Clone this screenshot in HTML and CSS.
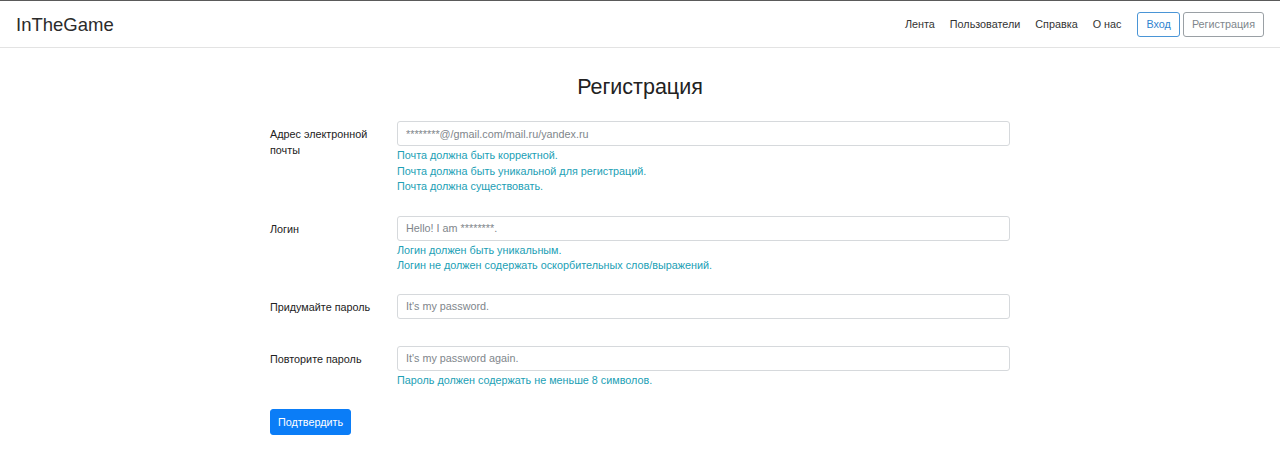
FILE: index.html
```html
<!DOCTYPE html>
<html lang="ru">
<head>
<meta charset="utf-8">
<title>InTheGame — Регистрация</title>
<link rel="stylesheet" href="styles.css">
</head>
<body>
<header class="navbar">
  <a class="brand" href="#">InTheGame</a>
  <nav class="nav">
    <a class="nav-link" href="#">Лента</a>
    <a class="nav-link" href="#">Пользователи</a>
    <a class="nav-link" href="#">Справка</a>
    <a class="nav-link" href="#">О нас</a>
    <div class="nav-buttons">
      <a class="btn btn-outline-primary" href="#">Вход</a>
      <a class="btn btn-outline-secondary" href="#">Регистрация</a>
    </div>
  </nav>
</header>
<main class="container">
  <h1 class="title">Регистрация</h1>
  <form class="form">
    <div class="form-group group-email">
      <label class="form-label" for="email">Адрес электронной почты</label>
      <div class="form-field">
        <input class="form-control" id="email" type="email" placeholder="********@/gmail.com/mail.ru/yandex.ru">
        <div class="help">
          <div>Почта должна быть корректной.</div>
          <div>Почта должна быть уникальной для регистраций.</div>
          <div>Почта должна существовать.</div>
        </div>
      </div>
    </div>
    <div class="form-group group-login">
      <label class="form-label" for="login">Логин</label>
      <div class="form-field">
        <input class="form-control" id="login" type="text" placeholder="Hello! I am ********.">
        <div class="help">
          <div>Логин должен быть уникальным.</div>
          <div>Логин не должен содержать оскорбительных слов/выражений.</div>
        </div>
      </div>
    </div>
    <div class="form-group group-pass">
      <label class="form-label" for="pass">Придумайте пароль</label>
      <div class="form-field">
        <input class="form-control" id="pass" type="password" placeholder="It's my password.">
      </div>
    </div>
    <div class="form-group group-repeat">
      <label class="form-label" for="pass2">Повторите пароль</label>
      <div class="form-field">
        <input class="form-control" id="pass2" type="password" placeholder="It's my password again.">
        <div class="help">
          <div>Пароль должен содержать не меньше 8 символов.</div>
        </div>
      </div>
    </div>
    <button class="btn btn-primary" type="button">Подтвердить</button>
  </form>
</main>
</body>
</html>
```

FILE: styles.css
```css
* { box-sizing: border-box; }

html, body {
  margin: 0;
  padding: 0;
  background: #fff;
}

body {
  font-family: "Liberation Sans", Arial, sans-serif;
  font-size: 10.8px;
  color: #212529;
  border-top: 1px solid #5a5a5a;
}

a { text-decoration: none; }

.navbar {
  height: 47px;
  display: flex;
  align-items: center;
  justify-content: space-between;
  padding: 0 16px;
  border-bottom: 1px solid #e3e3e3;
}

.brand {
  font-size: 18.5px;
  color: #2b2b2b;
  padding-top: 1px;
}

.nav {
  display: flex;
  align-items: center;
  gap: 15px;
}

.nav-link {
  color: #333;
  font-size: 10.8px;
}

.nav-buttons {
  display: flex;
  gap: 3px;
  margin-left: 1px;
}

.btn {
  display: inline-flex;
  align-items: center;
  justify-content: center;
  height: 25px;
  padding: 0 8px;
  font-family: inherit;
  font-size: 10.8px;
  border-radius: 3px;
  border: 1px solid transparent;
  background: #fff;
  cursor: pointer;
}

.btn-outline-primary {
  color: #2f84cf;
  border-color: #4a95d6;
}

.btn-outline-secondary {
  color: #80868c;
  border-color: #9aa0a5;
}

.btn-primary {
  background: #0b7df7;
  color: #fff;
  border-color: #0b7df7;
  height: 26px;
  padding: 0 7px;
}

.container {
  width: 740px;
  margin: 0 auto;
}

.title {
  margin: 26px 0 21px;
  text-align: center;
  font-size: 21.5px;
  font-weight: 400;
  line-height: 26px;
  color: #222;
}

.form-group {
  display: grid;
  grid-template-columns: 127px 1fr;
  margin-bottom: 20px;
}

.group-email { margin-bottom: 21px; }
.group-login { margin-bottom: 20px; }
.group-pass { margin-bottom: 27px; }
.group-repeat { margin-bottom: 20px; }

.form-label {
  padding-top: 5px;
  padding-right: 8px;
  line-height: 16px;
  color: #222;
}

.form-control {
  display: block;
  width: 100%;
  height: 25px;
  padding: 0 8px;
  font-family: inherit;
  font-size: 10.8px;
  color: #495057;
  border: 1px solid #d6d9dc;
  border-radius: 3px;
  background: #fff;
}

.form-control::placeholder {
  color: #80868b;
}

.help {
  margin-top: 2px;
  color: #21a0b5;
  line-height: 15.6px;
}
```
